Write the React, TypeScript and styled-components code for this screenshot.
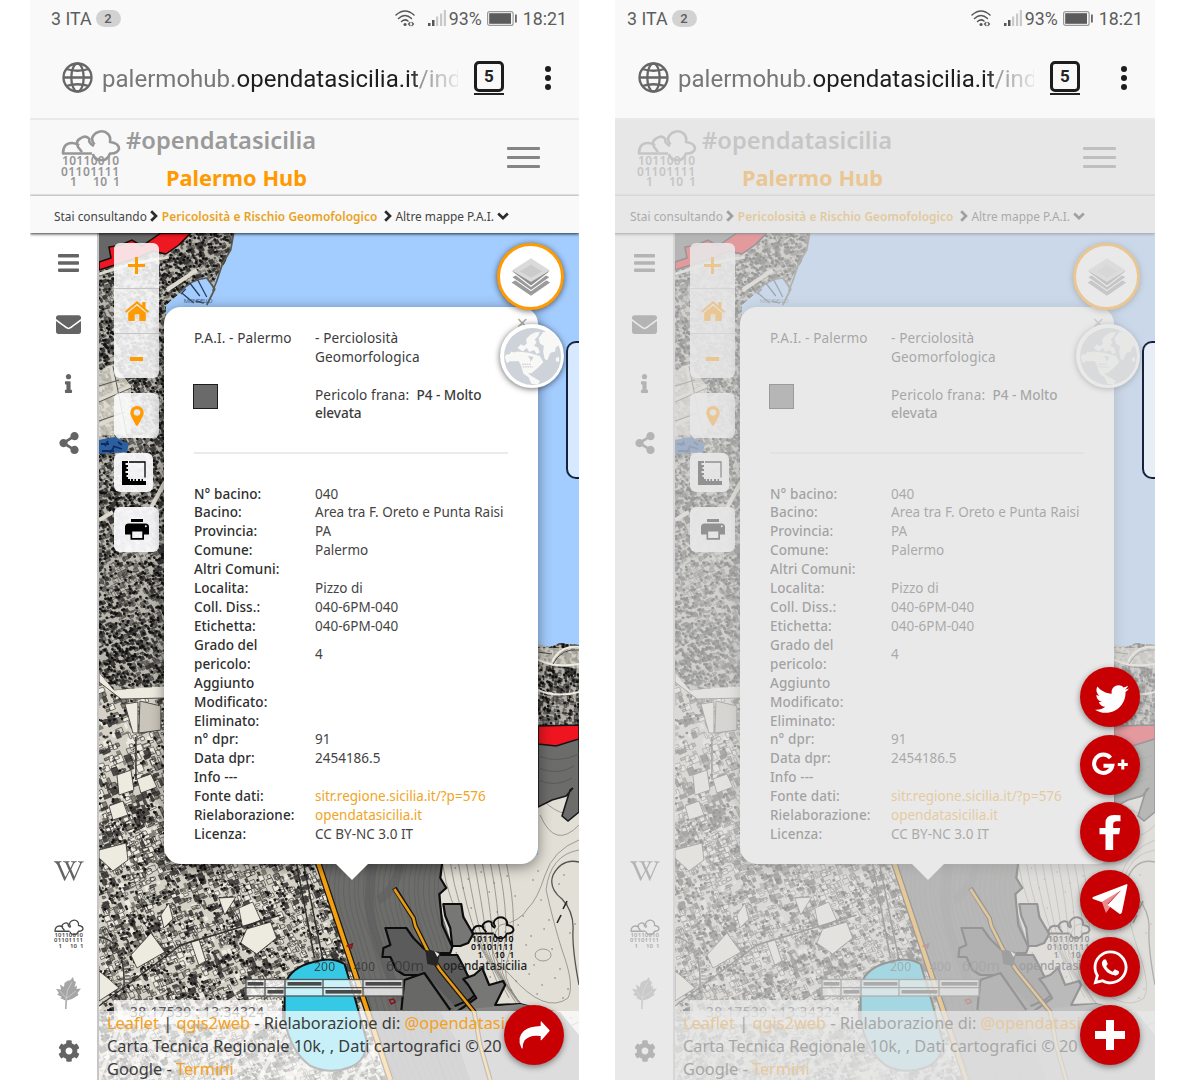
import React from "react";
import styled, { createGlobalStyle, css } from "styled-components";
import {
  FaCog,
  FaEnvelope,
  FaInfo,
  FaShareAlt,
  FaTwitter,
  FaWhatsapp,
  FaWikipediaW,
} from "react-icons/fa";

const GlobalStyle = createGlobalStyle`
  *, *::before, *::after { box-sizing: border-box; }
  body { margin: 0; background: #fff; overflow: hidden; }
`;

const sans = `"Noto Sans", "Open Sans", sans-serif`;
const roboto = `Roboto, sans-serif`;

/* ---------- map texture ---------- */

function makeRandom(seed: number) {
  let s = seed;
  return () => {
    s = (s * 1664525 + 1013904223) >>> 0;
    return s / 4294967296;
  };
}

type Texture = { pale: string; grey: string; dark: string; lines: string; dots: string; roads: string };

function buildCity(seed: number, x0: number, y0: number, w: number, h: number, step: number, density: number, tilt: number): Texture {
  const rnd = makeRandom(seed);
  const t: Texture = { pale: "", grey: "", dark: "", lines: "", dots: "", roads: "" };
  const c = Math.cos(tilt);
  const s = Math.sin(tilt);
  const cx = x0 + w / 2;
  const cy = y0 + h / 2;
  const reach = (Math.abs(w) + Math.abs(h)) / 2;
  const point = (u: number, v: number) => [cx + u * c - v * s, cy + u * s + v * c];
  for (let u = -reach; u < reach; u += step) {
    for (let v = -reach; v < reach; v += step) {
      const [px, py] = point(u, v);
      if (px < x0 - 6 || px > x0 + w + 6 || py < y0 - 6 || py > y0 + h + 6) continue;
      const a = step * (0.35 + rnd() * 1.1);
      const b = step * (0.35 + rnd() * 1.1);
      const ju = u + (rnd() - 0.5) * step * 1.6;
      const jv = v + (rnd() - 0.5) * step * 1.6;
      const corners = [point(ju, jv), point(ju + a, jv + rnd()), point(ju + a, jv + b), point(ju, jv + b)];
      const quad = "M" + corners.map((p) => p[0].toFixed(1) + " " + p[1].toFixed(1)).join("L") + "Z";
      const patch = (Math.sin(px / 17 + seed) * Math.cos(py / 23) + Math.sin((px + py) / 9) * 0.5) * 0.24;
      const r = rnd() + patch;
      if (r < density * 0.4) t.dark += quad;
      else if (r < density) t.grey += quad;
      else if (r < 0.9) t.pale += quad;
      if (rnd() < 0.68) t.lines += quad;
      if (rnd() + patch < density * 0.56) {
        const [dx, dy] = point(ju, jv);
        t.dots += `M${dx.toFixed(1)} ${dy.toFixed(1)}h.1`;
      }
    }
  }
  for (let i = 0; i < (w * h) / 4500; i++) {
    const [ax, ay] = [x0 + rnd() * w, y0 + rnd() * h];
    const len = 30 + rnd() * 60;
    const dir = rnd() < 0.5 ? tilt : tilt + Math.PI / 2;
    t.roads += `M${ax.toFixed(1)} ${ay.toFixed(1)}l${(Math.cos(dir) * len).toFixed(1)} ${(Math.sin(dir) * len).toFixed(1)}`;
  }
  return t;
}

const northCity = buildCity(7, 98, 233, 140, 450, 3.7, 0.85, -0.45);
const midCity = buildCity(19, 98, 640, 70, 224, 5.6, 0.5, -0.4);
const southCity = buildCity(31, 98, 820, 290, 260, 4.6, 0.54, -0.42);
const eastCity = buildCity(43, 536, 645, 46, 85, 3.7, 0.85, 0.1);

const range = (n: number) => Array.from({ length: n }, (_, i) => i);

function City({ texture, dense }: { texture: Texture; dense?: boolean }) {
  return (
    <g>
      <path d={texture.grey} fill={dense ? "#74726e" : "#858379"} />
      <path d={texture.roads} stroke={dense ? "#b5b2aa" : "#dedbd0"} strokeWidth="2" />
      <path d={texture.pale} fill={dense ? "#c2bfb6" : "#eeebe0"} />
      <path d={texture.dark} fill={dense ? "#3f3e3c" : "#4c4b48"} />
      <path d={texture.lines} fill="none" stroke="#2c2b2a" strokeWidth=".7" opacity={dense ? 0.6 : 0.85} />
      <path d={texture.dots} stroke="#0d0d0d" strokeWidth="2.7" strokeLinecap="round" opacity=".9" />
    </g>
  );
}

function MapDrawing({ id }: { id: string }) {
  return (
    <MapSvg viewBox="98 233 481 847" preserveAspectRatio="none">
      <defs>
        <clipPath id={`${id}-north`}>
          <path d="M98 233H233Q230 255 220 270Q210 283 214 292L206 276Q192 280 180 292L165 305V686L113 690L98 672Z" />
        </clipPath>
        <clipPath id={`${id}-east`}>
          <path d="M538 644L550 647L560 643L579 645V730H538Z" />
        </clipPath>
        <clipPath id={`${id}-south`}>
          <path d="M98 670H165V820H305L390 1080H98Z" />
        </clipPath>
        <clipPath id={`${id}-hill`}>
          <path d="M318 860H442L440 878L446 888L440 895L441 912L452 946L450 954L500 1010L540 1080H386Z" />
        </clipPath>
      </defs>
      <rect x="98" y="233" width="481" height="847" fill="#a3cdff" />

      <g clipPath={`url(#${id}-south)`}>
        <rect x="98" y="640" width="300" height="440" fill="#d5d1c6" />
        <City texture={midCity} />
        <City texture={southCity} />
        <g fill="#edeadf" stroke="#33312e" strokeWidth=".8">
          <path d="M98 672L113 690L165 684V698L120 699L98 682Z" />
          <path d="M124 704L137 702V733L132 733Z" />
          <path d="M139 701L160 706V730L138 733Z" fill="#c9c5ba" />
          <path d="M116 775L130 770L133 790L118 795Z" />
          <path d="M136 779L150 774L156 787L140 793Z" />
          <path d="M108 806L122 801L127 815L112 820Z" />
          <path d="M98 850L125 843L127 860L112 871L98 858Z" />
          <path d="M238 908L252 902L260 920L242 928Z" />
          <path d="M218 898L235 897L224 915Z" />
          <path d="M246 929L270 922L276 938L256 954L240 943Z" />
          <path d="M130 955L150 933L164 952L136 968Z" />
          <path d="M98 971L108 979L118 988L98 1001Z" />
          <path d="M190 942L198 939L205 961L198 965Z" />
          <path d="M168 903L172 919L163 928L160 915Z" />
        </g>
        <path d="M98 1006L180 945L280 915M296 864L314 958M303 864L322 958M98 937Q125 940 123 988M135 737V780" fill="none" stroke="#302f2c" strokeWidth="1.4" />
        <path d="M98 941Q129 945 126 985" fill="none" stroke="#66645e" strokeWidth="5" strokeDasharray="1.5 2" />
        {range(9).map((i) => (
          <path key={i} d={`M${98 + i * 32} 1080L${122 + i * 34} 1015`} stroke="#f3f1e9" strokeWidth="4" opacity=".7" />
        ))}
      </g>

      <g clipPath={`url(#${id}-north)`}>
        <rect x="98" y="233" width="150" height="460" fill="#b9b6ad" />
        <City texture={northCity} dense />
        <path d="M98 371L112 364L124 378L130 386V434L98 436Z" fill="#e9e5d8" opacity=".75" />
        <path d="M98 400L130 386M110 366L124 436M98 425L130 410M166 290L196 270M98 520L112 512M164 482L150 508" fill="none" stroke="#ddd9ce" strokeWidth="4" />
        <path d="M98 402L130 388M112 366L126 436M98 386L118 380M98 421L124 412" fill="none" stroke="#555" strokeWidth="1" />
        <path d="M98 274L130 264L168 257" stroke="#ddd8cc" strokeWidth="3" />
        <path d="M98 233H190L165 253L148 254L130 262L98 271Z" fill="#676767" />
        <path d="M98 262L110 258L108 247L120 245L131 240L141 246L160 233H190L178 245L165 254L152 251L136 258L98 270Z" fill="#ee1822" stroke="#16080a" strokeWidth="1.5" />
        <path d="M98 440L114 437L128 444L126 452L98 454Z" fill="#2c5f9f" />
        <path d="M100 444h8m4 2l9 3m-20 2h12m4-9l4 3m-14-4l-3 5m9 1l-4 6" stroke="#102b5e" strokeWidth="1.8" />
      </g>
      <path d="M179 292Q191 279 206 278L214 289L206 305M233 233L230 250L222 263L216 281L212 291" fill="none" stroke="#5e584c" strokeWidth="1.7" />
      <path d="M189 283l10 13m-2-16l9 17m-25-4l12 10m-8-14l-5 5m15 7l8 2" stroke="#28405f" strokeWidth="1.3" />
      <text x="183" y="303" fontFamily="Noto Sans, sans-serif" fontSize="6" fill="#49617f" textLength="29">MONDELLO</text>

      <path d="M538 700H579V1080H388L318 855H538Z" fill="#e2dfd6" />
      <g fill="none" stroke="#8c8981" strokeWidth=".8">
        {range(9).map((i) => (
          <path key={i} d={`M${442 + i * 8} 862Q${448 + i * 9} ${905 + i * 3} ${467 + i * 5} ${928 + i * 4}T${500 + i * 9} ${990 + i * 8}`} />
        ))}
        <path d="M579 840Q553 850 545 875T528 908Q520 922 500 925Q480 950 510 975Q545 1015 568 998Q575 985 562 950Q554 925 546 890Q550 855 579 850" />
        <path d="M579 862Q562 858 553 875Q548 888 562 899Q574 912 573 930T579 985" stroke="#55534d" strokeWidth="1.3" />
        <ellipse cx="543" cy="955" rx="8" ry="6" />
        <path d="M538 1080Q530 1040 579 1022M560 1080Q560 1055 579 1046" />
        <path d="M538 795Q560 820 579 812M540 815Q555 850 579 825" />
      </g>
      <g fill="#6e6b65">
        {range(70).map((i) => (
          <circle key={i} cx={455 + ((i * 37) % 122)} cy={868 + ((i * 53) % 208)} r=".7" />
        ))}
      </g>
      <path d="M567 901l-4 8m-2 6l-4 8" stroke="#24231f" strokeWidth="1.6" />

      <g clipPath={`url(#${id}-east)`}>
        <rect x="538" y="640" width="45" height="92" fill="#b4b1a9" />
        <City texture={eastCity} dense />
        <path d="M538 648H579V668L552 666L538 660Z" fill="#d8d5cb" opacity=".7" />
        <path d="M552 662Q560 645 579 647M538 690Q555 698 579 692M538 660Q555 668 579 664" fill="none" stroke="#efece2" strokeWidth="2" />
        <path d="M553 664Q561 648 579 650M538 652l14 2" fill="none" stroke="#444" strokeWidth="1" />
      </g>
      <path d="M579 738V812L568 821L562 816L570 790L573 788L566 796L552 800L538 807V744Z" fill="#6c6c6b" stroke="#191919" strokeWidth="1.6" />
      <path d="M538 726L579 725V739L556 746L538 744Z" fill="#ee1520" stroke="#141414" strokeWidth="1.6" />
      <path d="M538 756q20 8 41 -2M538 768q20 8 36 -2M538 780q18 8 34 -2" fill="none" stroke="#565656" strokeWidth=".8" />

      <path d="M318 855H442L440 878L446 888L440 895L441 912L452 946L450 954L500 1010L540 1080H386Z" fill="#6d6d6c" />
      <g clipPath={`url(#${id}-hill)`} fill="none" stroke="#5c5c5b" strokeWidth=".6">
        {range(34).map((i) => (
          <path key={i} d={`M${322 + i * 5} 862q${-10 + (i % 4)} 30 2 60t${18 + (i % 5)} 70t30 90`} />
        ))}
        <path d="M372 864Q366 900 372 925T400 1000" stroke="#5e5e5d" strokeWidth="9" opacity=".6" />
        <path d="M400 864Q395 890 378 900" stroke="#5e5e5d" strokeWidth="9" opacity=".5" />
      </g>
      <g stroke="#0d0d0d" strokeWidth="2.2" strokeLinejoin="round">
        <path d="M442 862L440 878L446 888L439 894L442 925L452 947L450 953L438 953" fill="none" />
        <path d="M443 904L461 904L463 917L473 934L468 943L460 946L452 946L450 928L445 916Z" fill="#777776" />
        <path d="M385 928L406 928L413 938L424 949L441 955L457 955L463 966L476 994L469 1000L450 1008L424 975L404 975L396 970L390 957L382 957L383 948L390 945Z" fill="#5b5b5b" />
        <path d="M404 980L424 973L456 1008L440 1010L420 1010L401 1010Z" fill="#686867" stroke="none" />
        <path d="M401 1010L404 980L424 973L450 1010" fill="none" />
        <path d="M463 979L474 975L482 968L489 985L503 981L505 985L495 1005L520 1004L535 1008L500 1018L455 1013L476 998L468 985Z" fill="#777776" />
      </g>
      <path d="M440 1012L520 1004L560 1012L579 1035V1080H470L456 1040Z" fill="#858584" />
      <path d="M284 985Q290 967 313 962Q330 956 344 964L355 1000L366 1040Q367 1060 350 1067Q330 1075 310 1066Q290 1052 284 1020Z" fill="#36c9e6" stroke="#111" strokeWidth="2" />
      <path d="M315 855L390 1080" fill="none" stroke="#1c160c" strokeWidth="6.5" />
      <path d="M315 855L390 1080" fill="none" stroke="#f3a012" strokeWidth="4" />
      <path d="M394 888L413 918L415 926L427 950L440 970L466 1002L474 1012L480 1045L490 1080" fill="none" stroke="#1c160c" strokeWidth="5" />
      <path d="M394 889L413 918L415 926L427 950L440 970L466 1002L474 1012L480 1045L490 1080" fill="none" stroke="#e79c16" strokeWidth="2.6" />
      <path d="M425 950L440 952L437 966L427 964Z" fill="#262626" />
      <path d="M434 951l5 3l-2 3z" fill="#eee" />
      <path d="M347 946l5-2-1 4zM389 1000l4-1 2 3-4 2z" fill="none" stroke="#80161b" strokeWidth="1.4" />
    </MapSvg>
  );
}

const MapSvg = styled.svg`
  display: block;
  width: 100%;
  height: 100%;
`;

/* ---------- icons ---------- */

const IconSvg = styled.svg<{ $w: number; $h: number }>`
  display: block;
  flex: none;
  overflow: visible;
  width: ${(p) => p.$w}px;
  height: ${(p) => p.$h}px;
`;

function CloudLogo({ size, color }: { size: number; color: string }) {
  return (
    <IconSvg $w={size} $h={size * 0.96} viewBox="0 0 60 57.6">
      <g fill="none" stroke={color} strokeWidth="2.6" strokeLinejoin="round">
        <path d="M31 22.500H2Q2 12 11 12Q15 12 18 14.500" />
        <path d="M33 15Q27 12 28.500 8Q25 4 20 7Q14 10 17 16L21 21" />
        <path d="M33.500 13.500Q28 7 35 2Q42 -2 47 3Q50 6 49 11Q58 12 58 18Q56 23 49 22.500Q46 30 40 29Q33 29 32 23" />
      </g>
      <g fill={color} fontFamily="Noto Sans, sans-serif" fontWeight="600" fontSize="12">
        <text x="1" y="34.500" textLength="57">10110010</text>
        <text x="0" y="45" textLength="58">01101111</text>
        <text x="9" y="55.500">1</text>
        <text x="32" y="55.500" textLength="14">10</text>
        <text x="52" y="55.500">1</text>
      </g>
    </IconSvg>
  );
}

const GlobeIcon = () => (
  <IconSvg $w={31} $h={31} viewBox="0 0 31 31" fill="none" stroke="#666" strokeWidth="2.300">
    <circle cx="15.500" cy="15.500" r="14" />
    <ellipse cx="15.500" cy="15.500" rx="6.200" ry="14" />
    <path d="M1.500 15.500h28M4 7q11.500 3.500 23 0M4 24q11.500-3.500 23 0" />
  </IconSvg>
);

const WifiIcon = () => (
  <IconSvg $w={20} $h={17} viewBox="0 0 20 17" fill="none" stroke="#555" strokeWidth="1.500" strokeLinecap="round">
    <path d="M1 5Q10-3 19 5M3.500 8.500Q10 2.500 16.500 8.500M6.500 11.500Q10 8.500 13 11" />
    <path d="M10 14.500h.1" strokeWidth="3" />
    <path d="M15 12.500l-1.500 1.500 1.500 1.500M17 12.500l1.500 1.500-1.500 1.500" strokeWidth="1.200" />
  </IconSvg>
);

const SignalIcon = () => (
  <IconSvg $w={18} $h={17} viewBox="0 0 18 17">
    <path d="M0 13h2.500v3H0zM4 10h2.500v6H4z" fill="#555" />
    <path d="M8 6.500h2.200V16H8zM12 3.500h2.200V16H12zM15.800 0H18v16h-2.200z" fill="#c9c9c9" />
  </IconSvg>
);

const BatteryIcon = () => (
  <IconSvg $w={30} $h={15} viewBox="0 0 30 15">
    <rect x=".6" y=".6" width="25.500" height="13.800" rx="2" fill="none" stroke="#9a9a9a" strokeWidth="1.200" />
    <rect x="2.200" y="2.200" width="21.800" height="10.600" fill="#5b5b5b" />
    <rect x="28" y="3.500" width="1.800" height="8" fill="#666" />
  </IconSvg>
);

const ChevronRight = () => (
  <IconSvg $w={8} $h={12} viewBox="0 0 8 12" fill="none" stroke="#2b2b2b" strokeWidth="2.700">
    <path d="M1.200 1.200L6 6L1.200 10.800" />
  </IconSvg>
);

const ChevronDown = () => (
  <IconSvg $w={12} $h={8} viewBox="0 0 12 8" fill="none" stroke="#2b2b2b" strokeWidth="2.700">
    <path d="M1.200 1.500L6 6.200L10.800 1.500" />
  </IconSvg>
);

const BarsIcon = () => (
  <IconSvg $w={21} $h={18} viewBox="0 0 21 18" fill="#646464">
    <rect width="21" height="3.500" rx=".8" />
    <rect y="7.200" width="21" height="3.500" rx=".8" />
    <rect y="14.400" width="21" height="3.500" rx=".8" />
  </IconSvg>
);

const HomeIcon = () => (
  <IconSvg $w={24} $h={20} viewBox="0 0 24 20" fill="#ff9a00">
    <path d="M12 0L0 10.200L1.300 11.700L12 2.800L22.700 11.700L24 10.200L20.500 7.200V1H17.300V4.500Z" />
    <path d="M12 4.500L3.200 11.800V19Q3.200 20 4.200 20H9.700V13.300H14.300V20H19.800Q20.800 20 20.800 19V11.800Z" />
  </IconSvg>
);

const PinIcon = () => (
  <IconSvg $w={14} $h={20} viewBox="0 0 14 20" fill="#ff9a00">
    <path fillRule="evenodd" d="M7 0A6.700 6.700 0 0 0 .3 6.700C.3 9 2 12 6 19.300Q7 20.700 8 19.300C12 12 13.700 9 13.700 6.700A6.700 6.700 0 0 0 7 0ZM7 3.200A3.300 3.300 0 1 1 7 9.800A3.300 3.300 0 1 1 7 3.200Z" />
  </IconSvg>
);

const RulerIcon = () => (
  <IconSvg $w={24} $h={24} viewBox="0 0 24 24">
    <path d="M0 0H6V2H3.500V4H6V6H4.500V8H6V10H3.500V12H6V14H4.500V16H6V18H8V20H9V18H11V20H12.500V18H14V20H16V18H18V20H19.500V18H21V20H24V24H0Z" />
    <path d="M7 1H23V16.500" fill="none" stroke="#000" strokeWidth="1.300" />
  </IconSvg>
);

const PrintIcon = () => (
  <IconSvg $w={24} $h={21} viewBox="0 0 24 21">
    <path d="M6 0H18V3H6Z" />
    <path fillRule="evenodd" d="M3.500 4.500H20.500Q24 4.500 24 8V15.500H19V20.800H5.500V15.500H0V8Q0 4.500 3.500 4.500ZM7.200 12.500V19H17.300V12.500ZM20.800 6.300A1 1 0 1 0 20.900 8.300A1 1 0 1 0 20.800 6.300Z" />
  </IconSvg>
);

const LayersIcon = () => (
  <IconSvg $w={40} $h={38} viewBox="604 84 118 113">
    <path d="M605 157L663 125L720 157L663 196Z" fill="#9b9b9b" />
    <path d="M605 141L663 110L720 141L663 181Z" fill="#999" stroke="#fff" strokeWidth="3" />
    <path d="M605 124L663 92L720 124L663 168Z" fill="#8f8f8f" stroke="#fff" strokeWidth="3" />
    <path d="M606 121L663 85L719 121L663 155Z" fill="#dadada" />
    <path d="M630 124L663 104L696 124L663 143Z" fill="#cbcbcb" />
  </IconSvg>
);

const WorldIcon = () => (
  <IconSvg $w={57} $h={57} viewBox="581 291 173 173">
    <circle cx="667.500" cy="377.500" r="86.500" fill="#cdd3d8" />
    <g fill="#f8f8f6">
      <path d="M583 378L590 370L598 376L602 362L618 368L640 372L652 375L658 382L668 372L676 378L690 384L700 394L692 403L680 396L684 412L672 409L664 425L654 428L664 437L680 446L690 452L684 463L664 460L655 440L640 430L634 410L638 398L626 388L608 386L598 393L590 398Z" />
      <path d="M622 352L632 340L642 346L650 338L648 325L660 312L676 304L690 303L684 316L674 326L680 334L672 345L684 350L690 365L680 370L672 358L658 364L650 352L638 362Z" />
      <path d="M592 372L622 362L656 366L690 376L700 394L684 412L664 428L650 428L634 408L626 392L600 392Z" />
      <path d="M686 322L700 303L722 300L744 322L752 340L738 350L736 362L722 366L712 390L704 384L700 362L702 346L690 338Z" />
      <path d="M738 382L748 378L748 392L740 394Z" />
    </g>
    <path d="M652 376Q664 386 660 394Q670 386 670 378Z" fill="#cdd3d8" />
    <path d="M636 401h26m-24 8h30" stroke="#a8b0b6" strokeWidth="2" strokeDasharray="5 2" />
  </IconSvg>
);

const LeafIcon = () => (
  <IconSvg $w={25} $h={32} viewBox="0 0 25 32">
    <path
      d="M17 0L18 4L20 5L18.500 10L21 8.500L20.500 12L25 11.500L21.500 16L22.500 18L16 22L11 23.500L10.500 32H9L9.500 23.500L4 21L6 20L1 17.500L3 16L0 12L5 12.500L4 7.500L8 10L8.500 6L12 3.500L14 3.500Z"
      fill="#a5a5a5"
    />
    <path d="M10 24L11.500 13L16 5M11 21L20 14M10 21L4 14" fill="none" stroke="#d0d0d0" strokeWidth=".8" />
  </IconSvg>
);

const GooglePlusIcon = () => (
  <IconSvg $w={36} $h={23} viewBox="0 0 36 23" fill="none" stroke="#fff">
    <path d="M18.500 5A9.200 9.200 0 1 0 20.300 12.700H11.500" strokeWidth="4" />
    <path d="M30.800 6.500v10M25.800 11.500h10" strokeWidth="3" />
  </IconSvg>
);

const FacebookIcon = () => (
  <IconSvg $w={22} $h={35} viewBox="596 525 65 105" fill="#fff">
    <path d="M660 526V544H649Q638 544 638 554V564H659L656 583H638V630H615V583H597V564H615V549Q615 525 641 525Z" />
  </IconSvg>
);

const PlaneIcon = () => (
  <IconSvg $w={36} $h={31} viewBox="0 0 36 31">
    <path d="M9.500 17L14 29L19 22L15.500 20L28 7Z" fill="#eb8a8e" />
    <path d="M35 0L1 13Q-.5 14 1 15L9.500 18L29 6.500L15.500 21L27 29.500Q29 31 30 28L35.500 1Z" fill="#fff" />
  </IconSvg>
);

const ForwardIcon = () => (
  <IconSvg $w={31} $h={28} viewBox="626 603 93 84" fill="#fff">
    <path d="M691 605Q692 603 694 605L717 630Q719 632 717 634L694 660Q691 662 691 659V648Q658 643 643 661Q637 670 637 684Q636 688 633 683Q618 652 641 632Q658 619 691 618Z" />
  </IconSvg>
);

const PlusIcon = () => (
  <IconSvg $w={30} $h={30} viewBox="0 0 30 30" fill="#fff">
    <path d="M11 0h8v11h11v8H19v11h-8V19H0v-8h11z" />
  </IconSvg>
);

/* ---------- shell ---------- */

const Canvas = styled.main`
  display: flex;
  gap: 36px;
  padding-left: 30px;
  width: 1200px;
  height: 1080px;
  overflow: hidden;
  background: #fff;
`;

const Frame = styled.section<{ $width: number }>`
  display: flex;
  justify-content: flex-end;
  width: ${(p) => p.$width}px;
  height: 1080px;
  overflow: hidden;
`;

const Screen = styled.div`
  display: flex;
  flex-direction: column;
  flex: none;
  width: 549px;
  height: 1080px;
  background: #f9f9f9;
`;

const StatusBar = styled.div`
  display: flex;
  align-items: center;
  height: 37px;
  padding: 0 12px 0 21px;
  font: 400 17.8px ${roboto};
  color: #5d5d5d;
`;

const StatusBadge = styled.span`
  display: grid;
  place-items: center;
  width: 25px;
  height: 17px;
  margin: 0 auto 0 4px;
  border-radius: 9px;
  background: #d2d2d2;
  font: 500 13px ${roboto};
`;

const StatusRight = styled.div`
  display: flex;
  align-items: center;
`;

const Spacer = styled.i<{ $w: number }>`
  width: ${(p) => p.$w}px;
`;

const AddressBar = styled.div`
  display: flex;
  align-items: center;
  height: 83px;
  padding: 1px 24px 1px 32px;
  border-bottom: 2px solid #e9e9e9;
`;

const Address = styled.div`
  width: 356px;
  margin: 3px 0 0 9px;
  overflow: hidden;
  white-space: nowrap;
  font: 400 24px/32px ${roboto};
  letter-spacing: 0.02px;
  color: #777;
  mask-image: linear-gradient(90deg, #000 86%, transparent 102%);
  b { font-weight: 400; color: #1e1e1e; }
`;

const TabCount = styled.div`
  width: 30px;
  height: 34px;
  margin: 0 0 0 16px;
  border-bottom: 2px solid #222;
  span {
    display: grid;
    place-items: center;
    height: 31px;
    border: 3px solid #1d1d1d;
    border-radius: 5px;
    font: 700 17px ${roboto};
    color: #222;
  }
`;

const MoreDots = styled.div`
  display: grid;
  gap: 3px;
  margin-left: auto;
  margin-right: 4px;
  i { width: 6px; height: 6px; border-radius: 50%; background: #1d1d1d; }
`;

const Page = styled.div`
  position: relative;
  display: flex;
  flex-direction: column;
  flex: 1;
  min-height: 0;
`;

const SiteHeader = styled.header`
  display: flex;
  flex: none;
  height: 76px;
  padding: 11px 39px 0 31px;
  border-bottom: 2px solid #e9e9e9;
  background: #f8f8f8;
`;

const Titles = styled.div`
  width: 200px;
  margin: -8px 0 0 5px;
  font-family: ${sans};
  white-space: nowrap;
`;

const HashTitle = styled.div`
  font-size: 23.7px;
  line-height: 34px;
  font-weight: 600;
  color: #9a9a9a;
`;

const SiteTitle = styled.div`
  padding: 4px 0 0 40px;
  font-size: 21.8px;
  line-height: 34px;
  font-weight: 700;
  color: #ff9a00;
`;

const Burger = styled.div`
  display: grid;
  align-content: start;
  gap: 6px;
  width: 33px;
  margin: 16px 0 0 auto;
  i { height: 3px; border-radius: 1px; background: #858585; }
`;

const Crumbs = styled.nav`
  position: relative;
  z-index: 1;
  display: flex;
  align-items: center;
  flex: none;
  height: 37px;
  padding: 2px 0 0 24px;
  background: #f9f9f9;
  box-shadow: 0 1px 3px rgba(0, 0, 0, 0.8);
  font: 400 11.9px ${sans};
  color: #444;
  white-space: nowrap;
`;

const CrumbLink = styled.a`
  margin: 0 7px 0 4px;
  font-weight: 600;
  letter-spacing: 0.06px;
  color: #eaa21e;
`;

const Body = styled.div`
  display: flex;
  flex: 1;
  min-height: 0;
`;

const Sidebar = styled.aside`
  display: flex;
  flex-direction: column;
  justify-content: space-between;
  flex: none;
  width: 69px;
  padding-left: 10px;
  border-right: 2px solid #c6c6c6;
  background: #fff;
`;

const SideItem = styled.div<{ $drop?: number }>`
  display: grid;
  place-items: center;
  height: 60px;
  padding-top: ${(p) => p.$drop ?? 0}px;
  color: #646464;
`;

const MapArea = styled.div`
  position: relative;
  flex: 1;
  min-width: 0;
  overflow: hidden;
`;

const Controls = styled.div`
  position: absolute;
  top: 10px;
  left: 15px;
  display: flex;
  flex-direction: column;
  gap: 15px;
`;

const ControlGroup = styled.div<{ $size?: number; $solid?: boolean }>`
  width: ${(p) => p.$size ?? 45}px;
  border-radius: 6px;
  background: rgba(250, 250, 252, ${(p) => (p.$solid ? 0.95 : 0.88)});
  overflow: hidden;
`;

const ControlButton = styled.div<{ $size?: number }>`
  display: grid;
  place-items: center;
  height: ${(p) => p.$size ?? 45}px;
  & + & { border-top: 1px solid #c5c5c5; }
`;

const bar = css`
  background: #ff9a00;
`;

const PlusMark = styled.i`
  position: relative;
  width: 17px;
  height: 3px;
  ${bar}
  &::after {
    content: "";
    position: absolute;
    left: 7px;
    top: -7px;
    width: 3px;
    height: 17px;
    ${bar}
  }
`;

const MinusMark = styled.i`
  width: 13px;
  height: 4px;
  margin-top: 6px;
  ${bar}
`;

const Popup = styled.article`
  position: absolute;
  left: 65px;
  top: 74px;
  width: 374px;
  height: 557px;
  padding: 22px 26px 0 30px;
  border-radius: 17px;
  background: #fff;
  box-shadow: 0 3px 14px rgba(0, 0, 0, 0.45);
  font: 400 13.2px/18.92px ${sans};
  color: #3b3b3b;
  &::after {
    content: "";
    position: absolute;
    left: 171px;
    top: 556px;
    border: 17px solid transparent;
    border-top-color: #fff;
    border-bottom: 0;
  }
`;

const Close = styled.span`
  position: absolute;
  right: 10px;
  top: 7px;
  font-size: 20px;
  color: #aaa;
`;

const PopupGrid = styled.div`
  display: grid;
  grid-template-columns: 121px 1fr;
  align-items: center;
`;

const HazardGrid = styled(PopupGrid)`
  align-items: start;
  grid-template-rows: 56.5px auto;
  height: 123px;
  font-size: 13.6px;
  letter-spacing: 0.12px;
`;

const Swatch = styled.div`
  width: 25px;
  height: 25px;
  margin: -2px 0 0 -1px;
  border: 1.5px solid #1c1c1c;
  background: #6a6a6a;
`;

const Rule = styled.hr`
  height: 2px;
  margin: 0 4px 30.5px 0;
  border: 0;
  background: #ebebeb;
`;

const Label = styled.div`
  font-size: 13.5px;
  font-weight: 500;
  letter-spacing: 0.08px;
  color: #2e2e2e;
`;

const Value = styled.div<{ $link?: boolean }>`
  white-space: nowrap;
  font-size: 13.5px;
  letter-spacing: 0;
  color: ${(p) => (p.$link ? "#efa51f" : "#444")};
`;

const Strong = styled.b`
  font-weight: 500;
  letter-spacing: -0.05px;
`;

const RoundButton = styled.div<{ $top: number; $world?: boolean }>`
  position: absolute;
  top: ${(p) => p.$top}px;
  right: 15px;
  display: grid;
  place-items: center;
  width: ${(p) => (p.$world ? 64 : 67)}px;
  height: ${(p) => (p.$world ? 64 : 67)}px;
  border: 3px solid ${(p) => (p.$world ? "#fff" : "#ff9a00")};
  border-radius: 50%;
  background: #fff;
  box-shadow: 0 1px 6px rgba(0, 0, 0, 0.6);
`;

const MapBrand = styled.div`
  position: absolute;
  left: 343px;
  top: 684px;
  display: grid;
  justify-items: center;
  width: 86px;
  font: 500 11.7px/12px ${sans};
  color: #222;
`;

const BrandMark = styled.div`
  padding-left: 16px;
`;

const ScaleSvg = styled.svg`
  position: absolute;
  left: 146px;
  top: 724px;
  width: 185px;
  height: 40px;
`;

const Coordinates = styled.div`
  position: absolute;
  left: 15px;
  top: 767px;
  width: 168px;
  height: 24px;
  padding-left: 16px;
  background: rgba(255, 255, 255, 0.72);
  font: 400 13.8px/24px ${sans};
  letter-spacing: 0.3px;
  color: #555;
`;

const Attribution = styled.div`
  position: absolute;
  left: 0;
  right: 0;
  bottom: 0;
  height: 69px;
  padding: 1px 0 0 8px;
  background: rgba(255, 255, 255, 0.72);
  font: 400 16.35px/22.8px ${sans};
  color: #3c3c3c;
  white-space: nowrap;
  a { color: #f5a11c; }
`;

const Dim = styled.div`
  position: absolute;
  inset: 0;
  z-index: 2;
  background: rgba(221, 221, 221, 0.66);
`;

const SlidePanel = styled.div`
  position: absolute;
  z-index: 3;
  right: 0;
  top: 221px;
  width: 13px;
  height: 138px;
  border: 2px solid #15243c;
  border-right: 0;
  border-radius: 10px 0 0 10px;
  background: rgba(255, 255, 255, 0.56);
`;

const ShareStack = styled.div`
  position: absolute;
  z-index: 4;
  right: 15px;
  bottom: 15px;
  display: grid;
  gap: 7.6px;
`;

const ShareButton = styled.div`
  display: grid;
  place-items: center;
  width: 60px;
  height: 60px;
  border-radius: 50%;
  background: #c90003;
  color: #fff;
  box-shadow: 0 2px 6px rgba(0, 0, 0, 0.45);
`;

const TwitterSlot = styled.span`
  display: grid;
  padding: 3px 0 0 3px;
`;

const details: Array<[string, string, boolean?]> = [
  ["N° bacino:", "040"],
  ["Bacino:", "Area tra F. Oreto e Punta Raisi"],
  ["Provincia:", "PA"],
  ["Comune:", "Palermo"],
  ["Altri Comuni:", ""],
  ["Localita:", "Pizzo di"],
  ["Coll. Diss.:", "040-6PM-040"],
  ["Etichetta:", "040-6PM-040"],
  ["Grado del pericolo:", "4"],
  ["Aggiunto", ""],
  ["Modificato:", ""],
  ["Eliminato:", ""],
  ["n° dpr:", "91"],
  ["Data dpr:", "2454186.5"],
  ["Info ---", ""],
  ["Fonte dati:", "sitr.regione.sicilia.it/?p=576", true],
  ["Rielaborazione:", "opendatasicilia.it", true],
  ["Licenza:", "CC BY-NC 3.0 IT"],
];

function InfoPopup() {
  return (
    <Popup>
      <Close>×</Close>
      <HazardGrid>
        <div>P.A.I. - Palermo</div>
        <div>- Perciolosità<br />Geomorfologica</div>
        <Swatch />
        <div>Pericolo frana:&nbsp; <Strong>P4 - Molto<br />elevata</Strong></div>
      </HazardGrid>
      <Rule />
      <PopupGrid>
        {details.map(([label, value, link]) => (
          <React.Fragment key={label}>
            <Label>{label === "Grado del pericolo:" ? <>Grado del<br />pericolo:</> : label}</Label>
            <Value $link={link}>{value}</Value>
          </React.Fragment>
        ))}
      </PopupGrid>
    </Popup>
  );
}

function ScaleBar() {
  const stops = [0, 20, 40, 78, 118, 158];
  return (
    <ScaleSvg viewBox="0 0 185 40">
      <rect x="1" y="22.500" width="157" height="16.500" fill="rgba(255,255,255,.75)" stroke="#555" strokeWidth="1.300" />
      <path d="M1 30.700h157M20 22v17M40 22v17M78 22v17M118 22v17" stroke="#555" strokeWidth="1.300" />
      {stops.slice(0, 5).map((x, i) => (
        <rect key={x} x={x + 2.5} y={i % 2 ? 33 : 25} width={stops[i + 1] - x - 4} height="3.600" fill="#4a4a4a" />
      ))}
      <g fontFamily="Noto Sans, sans-serif" fill="#3a3a3a" opacity=".9">
        <text x="69" y="14" fontSize="12" textLength="21">200</text>
        <text x="109" y="14" fontSize="12" textLength="21">400</text>
        <text x="141" y="14" fontSize="14.500" textLength="38">600m</text>
      </g>
    </ScaleSvg>
  );
}

function PhoneScreen({ id, sharing }: { id: string; sharing?: boolean }) {
  return (
    <Screen>
      <StatusBar>
        3 ITA
        <StatusBadge>2</StatusBadge>
        <StatusRight>
          <WifiIcon /><Spacer $w={13} /><SignalIcon /><Spacer $w={3} />93%<Spacer $w={5} />
          <BatteryIcon /><Spacer $w={6} />18:21
        </StatusRight>
      </StatusBar>
      <AddressBar>
        <GlobeIcon />
        <Address>palermohub.<b>opendatasicilia.it</b>/index</Address>
        <TabCount><span>5</span></TabCount>
        <MoreDots><i /><i /><i /></MoreDots>
      </AddressBar>
      <Page>
        <SiteHeader>
          <CloudLogo size={60} color="#969696" />
          <Titles>
            <HashTitle>#opendatasicilia</HashTitle>
            <SiteTitle>Palermo Hub</SiteTitle>
          </Titles>
          <Burger><i /><i /><i /></Burger>
        </SiteHeader>
        <Crumbs>
          Stai consultando<Spacer $w={3} /><ChevronRight />
          <CrumbLink>Pericolosità e Rischio Geomofologico</CrumbLink>
          <ChevronRight /><Spacer $w={3} />
          Altre mappe P.A.I.<Spacer $w={3} /><ChevronDown />
        </Crumbs>
        <Body>
          <Sidebar>
            <div>
              <SideItem><BarsIcon /></SideItem>
              <SideItem $drop={2}><FaEnvelope size={25} /></SideItem>
              <SideItem><FaInfo size={19} /></SideItem>
              <SideItem><FaShareAlt size={22} /></SideItem>
            </div>
            <div>
              <SideItem $drop={1}><FaWikipediaW size={30} /></SideItem>
              <SideItem $drop={8}><CloudLogo size={30} color="#484848" /></SideItem>
              <SideItem $drop={5}><LeafIcon /></SideItem>
              <SideItem $drop={2}><FaCog size={22} /></SideItem>
            </div>
          </Sidebar>
          <MapArea>
            <MapDrawing id={id} />
            <ScaleBar />
            <MapBrand>
              <BrandMark><CloudLogo size={44} color="#0d0d0d" /></BrandMark>
              opendatasicilia
            </MapBrand>
            <Coordinates>38.17539 : 13.34324</Coordinates>
            <Attribution>
              <a>Leaflet</a> | <a>qgis2web</a> - Rielaborazione di: <a>@opendatasicilia</a><br />
              Carta Tecnica Regionale 10k, , Dati cartografici © 20<br />
              Google - <a>Termini</a>
            </Attribution>
            <Controls>
              <ControlGroup>
                <ControlButton><PlusMark /></ControlButton>
                <ControlButton><HomeIcon /></ControlButton>
                <ControlButton><MinusMark /></ControlButton>
              </ControlGroup>
              <ControlGroup><ControlButton><PinIcon /></ControlButton></ControlGroup>
              <ControlGroup $size={39} $solid><ControlButton $size={39}><RulerIcon /></ControlButton></ControlGroup>
              <ControlGroup $solid><ControlButton><PrintIcon /></ControlButton></ControlGroup>
            </Controls>
            <InfoPopup />
            <RoundButton $top={10}><LayersIcon /></RoundButton>
            <RoundButton $top={91} $world><WorldIcon /></RoundButton>
          </MapArea>
        </Body>
        {sharing && <Dim />}
        <SlidePanel />
        <ShareStack>
          {sharing ? (
            <>
              <ShareButton><TwitterSlot><FaTwitter size={34} /></TwitterSlot></ShareButton>
              <ShareButton><GooglePlusIcon /></ShareButton>
              <ShareButton><FacebookIcon /></ShareButton>
              <ShareButton><PlaneIcon /></ShareButton>
              <ShareButton><FaWhatsapp size={39} /></ShareButton>
              <ShareButton><PlusIcon /></ShareButton>
            </>
          ) : (
            <ShareButton><ForwardIcon /></ShareButton>
          )}
        </ShareStack>
      </Page>
    </Screen>
  );
}

export default function App() {
  return (
    <>
      <GlobalStyle />
      <Canvas>
        <Frame $width={549}><PhoneScreen id="left" /></Frame>
        <Frame $width={540}><PhoneScreen id="right" sharing /></Frame>
      </Canvas>
    </>
  );
}
